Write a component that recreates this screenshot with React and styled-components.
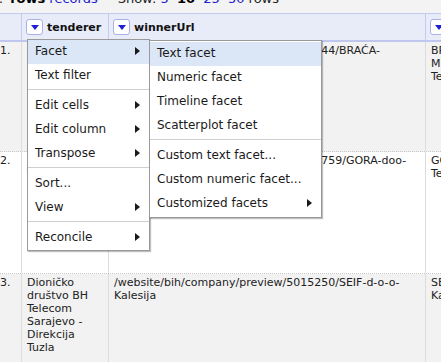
import React from "react"
import styled, { createGlobalStyle } from "styled-components"

const Global = createGlobalStyle`
    html, body { margin: 0; padding: 0; background: #fff; }
    body { font-family: "DejaVu Sans", Verdana, sans-serif; color: #222; }
`

const Page = styled.div`
    position: relative;
    width: 441px;
    height: 362px;
    overflow: hidden;
`

// barra de cima, cortada
const TopBar = styled.div`
    height: 13px;
    background: #f3f3f3;
    font-size: 13px;
    line-height: 15px;
    white-space: nowrap;
    overflow: hidden;
`

const TopText = styled.div`
    margin-top: -9px;
    margin-left: -16px;
`

const Lead = styled.span`
    margin-right: 7px;
`

const Link = styled.span`
    color: #2020cc;
    font-weight: ${p => p.$on ? "bold" : "normal"};
    ${p => p.$on && "color: #000;"}
`

const Show = styled.span`
    margin-left: 20px;
`

const Num = styled(Link)`
    margin-right: 4px;
    &:last-of-type { margin-right: 0; }
`

const cols = "22px 87px 317px 100px"

const HeadRow = styled.div`
    display: grid;
    grid-template-columns: ${cols};
    height: 29px;
    box-sizing: border-box;
    background: #e8ebf8;
    border-top: 1px solid #c5cbef;
    border-bottom: 2px solid #c0c7ee;
`

const HeadCell = styled.div`
    display: flex;
    align-items: center;
    gap: 4px;
    padding-left: 4px;
    border-right: 1px solid #c5cbef;
    font-size: 11px;
    font-weight: bold;
    color: #111;
    white-space: nowrap;
    overflow: hidden;
`

const DropButton = styled.span`
    flex: none;
    width: 17px;
    height: 16px;
    box-sizing: border-box;
    border: 1px solid #a9b1e6;
    border-radius: 3px;
    background: #fff;
    display: flex;
    align-items: center;
    justify-content: center;

    &::after {
        content: "";
        border-left: 4.5px solid transparent;
        border-right: 4.5px solid transparent;
        border-top: 5px solid #1f1fd6;
    }
`

const Row = styled.div`
    display: grid;
    grid-template-columns: ${cols};
    min-height: ${p => p.$h}px;
    box-sizing: border-box;
    background: ${p => p.$grey ? "#f2f2f2" : "#fff"};
    border-bottom: 1px dotted #c8c8c8;
`

const Cell = styled.div`
    padding: 2px 5px;
    padding-left: ${p => p.$num ? "0" : "5px"};
    border-right: 1px solid #dcdcdc;
    font-size: 11px;
    line-height: 13px;
    color: #222;
`

// menus
const Menu = styled.div`
    position: absolute;
    left: ${p => p.$x}px;
    top: ${p => p.$y}px;
    width: ${p => p.$w}px;
    box-sizing: border-box;
    padding: ${p => p.$pad}px 0;
    background: #fff;
    border: 1px solid #999;
    box-shadow: 1px 1px 1px rgba(0, 0, 0, 0.25);
    font-size: 12px;
    color: #1a1a1a;
`

const Item = styled.div`
    height: 24px;
    box-sizing: border-box;
    display: flex;
    align-items: center;
    justify-content: space-between;
    padding: 0 9px 3px 7px;
    white-space: nowrap;
    background: ${p => p.$hover ? "#dbe6f6" : "transparent"};
`

const Arrow = styled.span`
    width: 0;
    height: 0;
    border-top: 4px solid transparent;
    border-bottom: 4px solid transparent;
    border-left: 5px solid #1a1a1a;
`

const Sep = styled.div`
    height: 1px;
    margin: 1px 0 4px;
    background: #cfcfcf;
`

const rows = [
    {
        h: 110, grey: true, n: "1.",
        tenderer: "Općina Ljubuški",
        url: "/website/bih/company/preview/5012944/BRAĆA-MIJATOVIĆ-d-o-o-Ljubuški",
        winner: "BRAĆA MIJATOVIĆ Tešanj",
    },
    {
        h: 122, grey: false, n: "2.",
        tenderer: "Općina Tešanj",
        url: "/website/bih/company/preview/50121759/GORA-doo-Tešanj",
        winner: "GORA doo Tešanj",
    },
    {
        h: 120, grey: true, n: "3.",
        tenderer: "Dioničko društvo BH Telecom Sarajevo - Direkcija Tuzla",
        url: "/website/bih/company/preview/5015250/SEIF-d-o-o-Kalesija",
        winner: "SEIF d.o.o. Kalesija",
    },
]

const main = [
    ["Facet", true, true], ["Text filter"], "-",
    ["Edit cells", true], ["Edit column", true], ["Transpose", true], "-",
    ["Sort..."], ["View", true], "-",
    ["Reconcile", true],
]

const sub = [
    ["Text facet", false, true], ["Numeric facet"], ["Timeline facet"], ["Scatterplot facet"], "-",
    ["Custom text facet..."], ["Custom numeric facet..."], ["Customized facets", true],
]

function MenuItems({ items }) {
    return items.map((it, i) => it === "-"
        ? <Sep key={i} />
        : <Item key={i} $hover={it[2]}>
            <span>{it[0]}</span>
            {it[1] && <Arrow />}
        </Item>
    )
}

export default function App() {
    return <Page>
        <Global />

        <TopBar>
            <TopText>
                <Lead>as:</Lead>
                <Link $on>rows</Link> <Link>records</Link>
                <Show>Show: </Show>
                <Num>5</Num> <Num $on>10</Num> <Num>25</Num> <Num>50</Num> rows
            </TopText>
        </TopBar>

        <HeadRow>
            <HeadCell />
            <HeadCell><DropButton />tenderer</HeadCell>
            <HeadCell><DropButton />winnerUrl</HeadCell>
            <HeadCell><DropButton />winner</HeadCell>
        </HeadRow>

        {rows.map(r => <Row key={r.n} $h={r.h} $grey={r.grey}>
            <Cell $num>{r.n}</Cell>
            <Cell>{r.tenderer}</Cell>
            <Cell>{r.url}</Cell>
            <Cell>{r.winner}</Cell>
        </Row>)}

        <Menu $x={27} $y={39} $w={123} $pad={0}>
            <MenuItems items={main} />
        </Menu>

        <Menu $x={149} $y={40} $w={173} $pad={1}>
            <MenuItems items={sub} />
        </Menu>
    </Page>
}
